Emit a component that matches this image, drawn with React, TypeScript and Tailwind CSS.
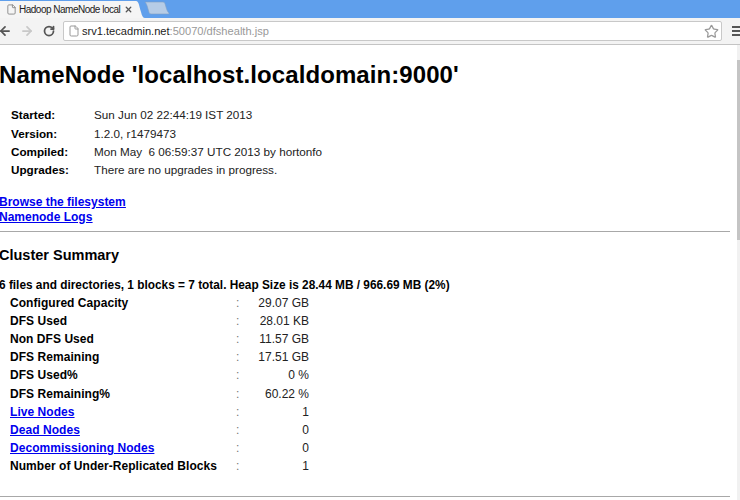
import { ArrowLeft, ArrowRight, File, RotateCw, Star, X } from "lucide-react";

const info = [
  ["Started:", "Sun Jun 02 22:44:19 IST 2013"],
  ["Version:", "1.2.0, r1479473"],
  ["Compiled:", "Mon May  6 06:59:37 UTC 2013 by hortonfo"],
  ["Upgrades:", "There are no upgrades in progress."],
];

const summary: { label: string; value: string; link?: boolean }[] = [
  { label: "Configured Capacity", value: "29.07 GB" },
  { label: "DFS Used", value: "28.01 KB" },
  { label: "Non DFS Used", value: "11.57 GB" },
  { label: "DFS Remaining", value: "17.51 GB" },
  { label: "DFS Used%", value: "0 %" },
  { label: "DFS Remaining%", value: "60.22 %" },
  { label: "Live Nodes", value: "1", link: true },
  { label: "Dead Nodes", value: "0", link: true },
  { label: "Decommissioning Nodes", value: "0", link: true },
  { label: "Number of Under-Replicated Blocks", value: "1" },
];

export default function App() {
  return (
    <div className="w-[740px] h-[500px] overflow-hidden flex flex-col bg-white font-['Liberation_Sans',Arial,sans-serif] text-black">
      <div className="h-[18px] shrink-0 bg-[#5f9fec] flex items-end">
        <div className="w-[135px] h-[17px] bg-[#f5f5f5] flex items-center pl-[6px] text-[10px] tracking-[-0.5px] text-[#222] shrink-0">
          <File size={11} className="text-[#888] shrink-0" />
          <span className="ml-[2px] whitespace-nowrap">Hadoop NameNode local</span>
          <X size={9} strokeWidth={3.5} className="text-[#555] ml-auto mr-[2px] shrink-0" />
        </div>
        <svg width="10" height="17" viewBox="0 0 10 17" className="shrink-0">
          <path d="M0 0 H1 C4 0 4 5 6 11 C7 15 8 17 10 17 H0 Z" fill="#f5f5f5" />
        </svg>
        <svg width="26" height="14" viewBox="0 0 26 14" className="shrink-0 mb-[3px] -ml-[1px]">
          <path d="M2 1 H19 C21 1 21 3 22 6 C23 10 24 11 25 12 V13 H7 C5 13 5 11 4 8 C3 4 2 2 1 1 Z" fill="#b6cce6" stroke="#7f9fc4" strokeWidth="0.6" />
        </svg>
      </div>
      <div className="h-[27px] shrink-0 bg-[#f3f3f3] border-b border-[#c4c4c4] flex items-center">
        <ArrowLeft size={14} strokeWidth={3} className="text-[#555] -ml-[2px] shrink-0" />
        <ArrowRight size={14} strokeWidth={3} className="text-[#c8c8c8] ml-[8px] shrink-0" />
        <RotateCw size={12} strokeWidth={3.5} className="text-[#555] ml-[9px] shrink-0" />
        <div className="ml-[8px] w-[659px] h-[20px] bg-white border border-[#c8c8c8] rounded-[2px] flex items-center pl-[4px] pr-[2px] text-[11.1px] shrink-0">
          <File size={12} className="text-[#999] shrink-0" />
          <span className="ml-[2px] text-[#222]">srv1.tecadmin.net</span>
          <span className="text-[#999]">:50070/dfshealth.jsp</span>
          <Star size={15} className="text-[#999] ml-auto" />
        </div>
        <div className="ml-[10px] w-[8px] flex flex-col gap-[2px] shrink-0">
          <div className="h-[2px] bg-[#555]" />
          <div className="h-[2px] bg-[#555]" />
          <div className="h-[2px] bg-[#555]" />
        </div>
      </div>
      <div className="flex-1 flex min-h-0">
        <div className="w-[737px] overflow-hidden">
          <div className="w-[730px] pt-[16px]">
            <h1 className="-ml-[1px] text-[24px] leading-[28px] font-bold whitespace-nowrap tracking-[0.08px]">NameNode 'localhost.localdomain:9000'</h1>
            <div className="mt-[17px] pl-[11px] flex flex-col">
              {info.map(([k, v]) => (
                <div key={k} className="flex h-[18.3px] items-center text-[11.7px]">
                  <span className="w-[83px] font-bold">{k}</span>
                  <span className="text-[#222] whitespace-pre">{v}</span>
                </div>
              ))}
            </div>
            <div className="mt-[15.4px] -ml-[1px] text-[12px] leading-[15px] font-bold text-[#0000ee] underline flex flex-col items-start">
              <a href="#">Browse the filesystem</a>
              <a href="#">Namenode Logs</a>
            </div>
            <hr className="mt-[6px] border-0 border-t border-[#a8a8a8]" />
            <h2 className="mt-[14px] -ml-[1px] text-[14.5px] leading-[18px] font-bold">Cluster Summary</h2>
            <div className="mt-[14px] -ml-[1px] text-[11.85px] leading-[15px] font-bold whitespace-nowrap">
              6 files and directories, 1 blocks = 7 total. Heap Size is 28.44 MB / 966.69 MB (2%)
            </div>
            <div className="mt-[1px] pl-[10px] flex flex-col">
              {summary.map((r) => (
                <div key={r.label} className="flex h-[18.2px] items-center text-[12px] whitespace-nowrap">
                  <span className="w-[226px] font-bold tracking-[0.05px]">
                    {r.link ? <a href="#" className="text-[#0000ee] underline">{r.label}</a> : r.label}
                  </span>
                  <span className="w-[10px] text-[#777]">:</span>
                  <span className="w-[63px] text-right text-[#222]">{r.value}</span>
                </div>
              ))}
            </div>
            <hr className="mt-[21px] border-0 border-t border-[#a8a8a8]" />
          </div>
        </div>
        <div className="w-[3px] bg-[#f1f1f1] flex flex-col pt-[15px]">
          <div className="h-[180px] bg-[#c4c4c4]" />
        </div>
      </div>
    </div>
  );
}
